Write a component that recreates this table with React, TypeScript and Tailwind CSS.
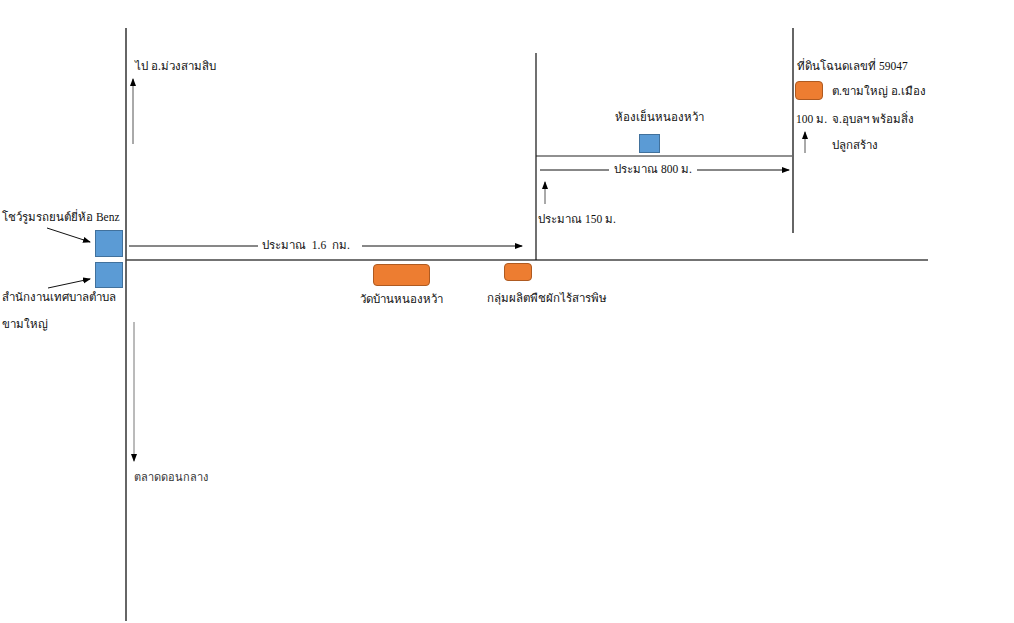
const serif = "font-['Liberation_Serif','Noto_Sans',serif]";
const text = `whitespace-nowrap leading-none text-[11.5px] text-[#111] ${serif}`;

// one pinned item on the map canvas
function Pin({
  x,
  y,
  children,
  className = "",
}: {
  x: number;
  y: number;
  children: React.ReactNode;
  className?: string;
}) {
  return (
    <div className={`absolute ${className}`} style={{ left: x, top: y }}>
      {children}
    </div>
  );
}

const blue = "bg-[#5b9bd5] border border-[#41719c]";
const orange = "bg-[#ed7d31] border border-[#ae5a21] rounded-[4px]";

export default function App() {
  return (
    <div className="relative w-[1014px] h-[623px] bg-white overflow-hidden">
      {/* roads and arrows */}
      <svg
        className="absolute inset-0"
        width={1014}
        height={623}
        viewBox="0 0 1014 623"
      >
        <defs>
          <marker
            id="head"
            markerWidth="8"
            markerHeight="8"
            refX="7"
            refY="4"
            orient="auto"
            markerUnits="userSpaceOnUse"
          >
            <path d="M0,1 L8,4 L0,7 Z" fill="#000" />
          </marker>
        </defs>

        {/* main roads */}
        <line x1="126" y1="28" x2="126" y2="621" stroke="#666" strokeWidth="2" />
        <line x1="126" y1="260" x2="928" y2="260" stroke="#444" strokeWidth="1.5" />
        <line x1="536" y1="53" x2="536" y2="260" stroke="#111" strokeWidth="1.2" />
        <line x1="536" y1="156" x2="793" y2="156" stroke="#222" strokeWidth="1.2" />
        <line x1="793" y1="28" x2="793" y2="233" stroke="#666" strokeWidth="2" />

        {/* 1.6 km arrow */}
        <line x1="129" y1="246" x2="258" y2="246" stroke="#111" strokeWidth="1" />
        <line x1="362" y1="246" x2="522" y2="246" stroke="#111" strokeWidth="1" markerEnd="url(#head)" />

        {/* 800 m arrow */}
        <line x1="540" y1="170" x2="609" y2="170" stroke="#111" strokeWidth="1" />
        <line x1="697" y1="170" x2="789" y2="170" stroke="#111" strokeWidth="1" markerEnd="url(#head)" />

        {/* small up arrows */}
        <line x1="545" y1="204" x2="545" y2="182" stroke="#555" strokeWidth="1" markerEnd="url(#head)" />
        <line x1="805" y1="153" x2="805" y2="132" stroke="#555" strokeWidth="1" markerEnd="url(#head)" />

        {/* north / south arrows */}
        <line x1="133" y1="144" x2="133" y2="79" stroke="#555" strokeWidth="1" markerEnd="url(#head)" />
        <line x1="134" y1="322" x2="134" y2="461" stroke="#777" strokeWidth="1" markerEnd="url(#head)" />

        {/* pointers to the left boxes */}
        <line x1="47" y1="228" x2="90" y2="242" stroke="#111" strokeWidth="1" markerEnd="url(#head)" />
        <line x1="48" y1="288" x2="90" y2="279" stroke="#111" strokeWidth="1" markerEnd="url(#head)" />
      </svg>

      {/* left side: showroom and municipal office */}
      <Pin x={2} y={212} className={text}>
        โชว์รูมรถยนต์ยี่ห้อ Benz
      </Pin>
      <Pin x={95} y={230} className="flex flex-col gap-[5px]">
        <div className={`w-[28px] h-[27px] ${blue}`} />
        <div className={`w-[28px] h-[26px] ${blue}`} />
      </Pin>
      <Pin x={2} y={292} className={`flex flex-col gap-[15px] ${text}`}>
        <span>สำนักงานเทศบาลตำบล</span>
        <span>ขามใหญ่</span>
      </Pin>

      {/* north / south */}
      <Pin x={135} y={61} className={text}>
        ไป อ.ม่วงสามสิบ
      </Pin>
      <Pin
        x={134}
        y={472}
        className="whitespace-nowrap leading-none font-['DejaVu_Sans','Noto_Sans',sans-serif] text-[11px] text-[#333]"
      >
        ตลาดดอนกลาง
      </Pin>

      {/* main road */}
      <Pin x={262} y={240} className={text}>
        ประมาณ&nbsp;&nbsp;1.6&nbsp;&nbsp;กม.
      </Pin>
      <Pin x={360} y={264} className={`flex flex-col items-center gap-[8px] ${text}`}>
        <div className={`w-[57px] h-[22px] ${orange}`} />
        <span>วัดบ้านหนองหว้า</span>
      </Pin>
      <Pin x={487} y={263} className={`flex flex-col gap-[12px] ${text}`}>
        <div className={`ml-[17px] w-[28px] h-[18px] ${orange}`} />
        <span>กลุ่มผลิตพืชผักไร้สารพิษ</span>
      </Pin>

      {/* side road */}
      <Pin x={615} y={112} className={`flex flex-col items-start gap-[10px] ${text}`}>
        <span>ห้องเย็นหนองหว้า</span>
        <div className={`ml-[24px] w-[21px] h-[19px] ${blue}`} />
      </Pin>
      <Pin x={614} y={164} className={text}>
        ประมาณ 800 ม.
      </Pin>
      <Pin x={538} y={214} className={text}>
        ประมาณ 150 ม.
      </Pin>

      {/* plot legend */}
      <Pin x={795} y={61} className={`flex flex-col gap-[8px] ${text}`}>
        <span className="ml-[2px]">ที่ดินโฉนดเลขที่ 59047</span>
        <div className="grid grid-cols-[37px_auto] gap-y-[14px] items-center">
          <div className={`w-[28px] h-[19px] ${orange}`} />
          <span className="mt-[3px]">ต.ขามใหญ่ อ.เมือง</span>
          <span className="ml-[1px]">100 ม.</span>
          <span>จ.อุบลฯ พร้อมสิ่ง</span>
          <span />
          <span className="mt-[1px]">ปลูกสร้าง</span>
        </div>
      </Pin>
    </div>
  );
}
